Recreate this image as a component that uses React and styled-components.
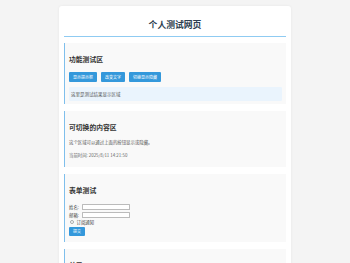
import React, { useState } from "react";
import styled, { createGlobalStyle } from "styled-components";

const GlobalStyle = createGlobalStyle`
  body {
    margin: 0;
    background: #f4f4f4;
    font-family: "Noto Sans CJK SC", "Noto Sans", sans-serif;
    color: #555;
  }
`;

const Page = styled.div`
  width: 222px;
  margin: 6px auto 0;
  padding: 0 5px 10px;
  background: #fff;
  border-radius: 3px;
  box-shadow: 0 0 3px rgba(0, 0, 0, 0.06);
`;

const Title = styled.h1`
  margin: 0 0 6px;
  padding: 13px 0 5px;
  font-size: 8.8px;
  line-height: 12px;
  font-weight: 700;
  text-align: center;
  color: #2c3e50;
  border-bottom: 1px solid #8fcbf2;
`;

const Section = styled.section`
  background: #f9f9f9;
  border-left: 1px solid #7fbfec;
  padding: 12px 4px ${(p) => p.$bottom || 4}px;
  margin-bottom: 7px;
`;

const Heading = styled.h2`
  margin: 0;
  font-size: 6.8px;
  line-height: 8px;
  font-weight: 700;
  color: #333;
`;

const ButtonRow = styled.div`
  display: flex;
  gap: 4px;
  margin-top: 9px;
`;

const Button = styled.button`
  height: 10px;
  padding: 0 4px;
  border: none;
  border-radius: 1px;
  background: #3498db;
  color: #fff;
  font-family: inherit;
  font-size: 4px;
  line-height: 10px;
  cursor: pointer;
`;

const InfoBox = styled.div`
  margin-top: 4.5px;
  height: 14px;
  padding: 0 2px;
  background: #eaf4fd;
  border-radius: 1px;
  font-size: 4.5px;
  line-height: 14px;
  color: #555;
`;

const Text = styled.p`
  margin: ${(p) => p.$top || 0}px 0 0;
  font-size: 4.4px;
  line-height: 6px;
  color: ${(p) => (p.$muted ? "#666" : "#555")};
`;

const Form = styled.form`
  margin-top: 9px;
  display: flex;
  flex-direction: column;
  align-items: flex-start;
`;

const Field = styled.label`
  display: flex;
  align-items: center;
  gap: 3px;
  height: 8px;
  font-size: 4.4px;
  color: #444;
`;

const Input = styled.input`
  box-sizing: border-box;
  width: 48px;
  height: 6px;
  padding: 0;
  border: 0.6px solid #bbb;
  border-radius: 0.5px;
  background: #fff;
`;

const Check = styled.input`
  appearance: none;
  margin: 0 0 0 1px;
  width: 4px;
  height: 4px;
  border: 0.5px solid #aaa;
  border-radius: 50%;
  background: #fff;
`;

const CheckField = styled(Field)`
  gap: 2.5px;
  height: 5px;
  margin-top: 0.5px;
`;

const Submit = styled(Button)`
  height: 8.7px;
  line-height: 8.7px;
  margin-top: 2.5px;
`;

export default function App() {
  const [message, setMessage] = useState("这里是测试结果显示区域");
  const [visible, setVisible] = useState(true);
  const time = "2025/8/11 14:21:50";

  return (
    <>
      <GlobalStyle />
      <Page>
        <Title>个人测试网页</Title>

        <Section $bottom={3.5}>
          <Heading>功能测试区</Heading>
          <ButtonRow>
            <Button onClick={() => alert("这是一个提示框")}>显示提示框</Button>
            <Button onClick={() => setMessage("文字已经被改变了！")}>改变文字</Button>
            <Button onClick={() => setVisible(!visible)}>切换显示隐藏</Button>
          </ButtonRow>
          <InfoBox>{message}</InfoBox>
        </Section>

        {visible && (
          <Section $bottom={9.5}>
            <Heading>可切换的内容区</Heading>
            <Text $top={8.3}>这个区域可以通过上面的按钮显示或隐藏。</Text>
            <Text $top={6.4} $muted>当前时间: {time}</Text>
          </Section>
        )}

        <Section $bottom={6.5}>
          <Heading>表单测试</Heading>
          <Form onSubmit={(ev) => ev.preventDefault()}>
            <Field>
              姓名:
              <Input type="text" />
            </Field>
            <Field>
              邮箱:
              <Input type="email" />
            </Field>
            <CheckField>
              <Check type="checkbox" />
              订阅通知
            </CheckField>
            <Submit type="submit">提交</Submit>
          </Form>
        </Section>

        <Section $bottom={10}>
          <Heading>关于</Heading>
          <Text $top={8.3}>这是一个用于测试的个人网页。</Text>
        </Section>
      </Page>
    </>
  );
}
